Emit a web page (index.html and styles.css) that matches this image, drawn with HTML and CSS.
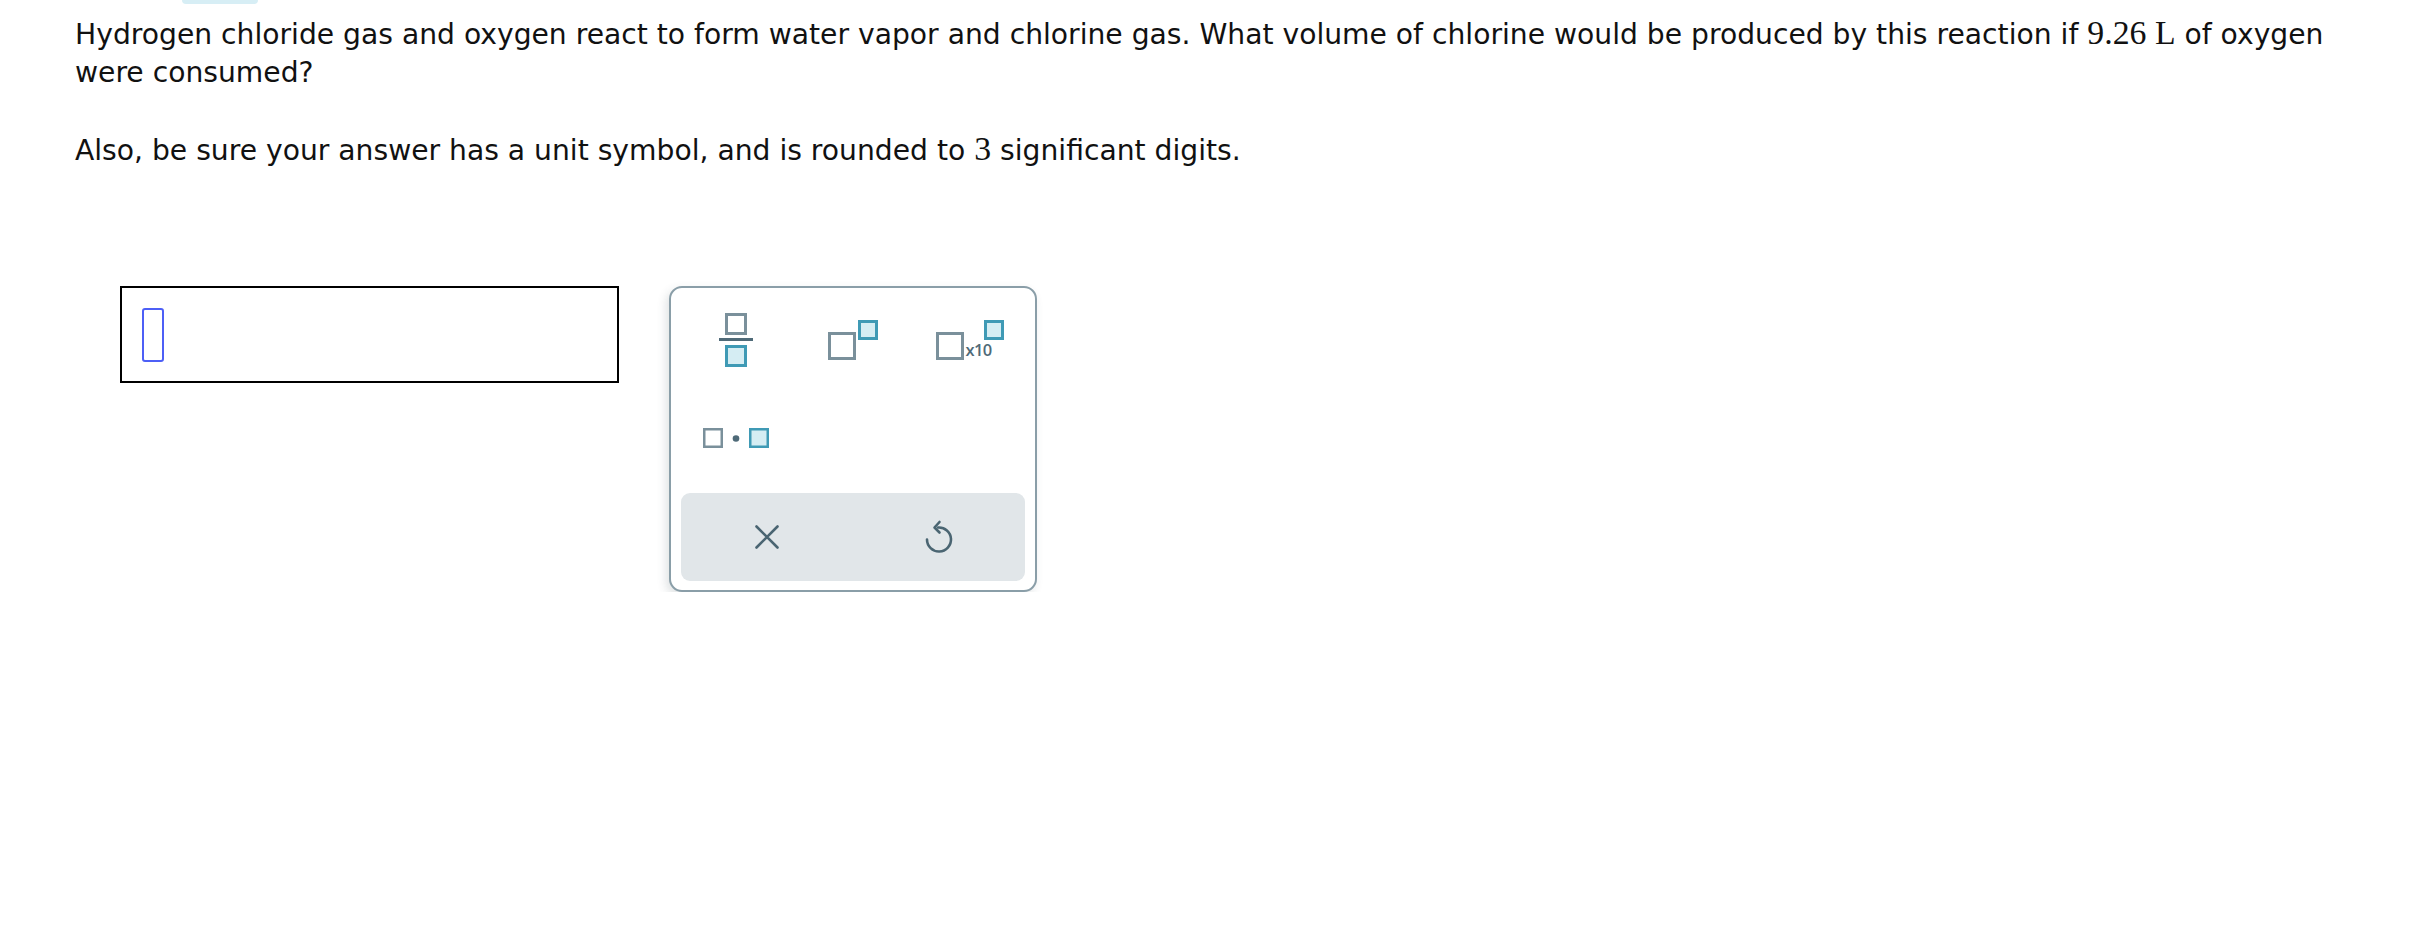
FILE: index.html
```html
<!DOCTYPE html>
<html lang="en">
<head>
<meta charset="utf-8">
<title>Question</title>
<link rel="stylesheet" href="styles.css">
</head>
<body>
<div class="peek"></div>
<div class="question">
  <p class="para">Hydrogen chloride gas and oxygen react to form water vapor and chlorine gas. What volume of chlorine would be produced by this reaction if <span class="math">9.26 L</span> of oxygen <span class="tail">were consumed?</span></p>
  <p class="para">Also, be sure your answer has a unit symbol, and is rounded to <span class="math">3</span> significant digits.</p>
</div>
<div class="answer-row">
  <div class="answer-input"><span class="cursor"></span></div>
  <div class="palette">
    <div class="palette-grid">
      <div class="cell">
        <svg class="ico" width="34" height="54" viewBox="0 0 34 54">
          <rect x="7.5" y="1.5" width="19" height="19" fill="#fff" stroke="#7a909b" stroke-width="3"/>
          <rect x="0" y="25" width="34" height="3" fill="#4f6a78"/>
          <rect x="7.5" y="33.5" width="19" height="19" fill="#d5edf3" stroke="#3f9ab5" stroke-width="3"/>
        </svg>
      </div>
      <div class="cell">
        <svg class="ico" width="50" height="40" viewBox="0 0 50 40">
          <rect x="1.5" y="13.5" width="25" height="25" fill="#fff" stroke="#7a909b" stroke-width="3"/>
          <rect x="31.5" y="1.5" width="17" height="17" fill="#d5edf3" stroke="#3f9ab5" stroke-width="3"/>
        </svg>
      </div>
      <div class="cell">
        <svg class="ico" width="68" height="40" viewBox="0 0 68 40">
          <rect x="1.5" y="13.5" width="25" height="25" fill="#fff" stroke="#7a909b" stroke-width="3"/>
          <text x="29.5" y="36" class="x10">x10</text>
          <rect x="49.5" y="1.5" width="17" height="17" fill="#d5edf3" stroke="#3f9ab5" stroke-width="3"/>
        </svg>
      </div>
      <div class="cell">
        <svg class="ico" width="66" height="20" viewBox="0 0 66 20">
          <rect x="1.25" y="1.25" width="17.5" height="17.5" fill="#fff" stroke="#7a909b" stroke-width="2.5"/>
          <circle cx="33" cy="10.5" r="3.3" fill="#4f6a78"/>
          <rect x="47.25" y="1.25" width="17.5" height="17.5" fill="#d5edf3" stroke="#3f9ab5" stroke-width="2.5"/>
        </svg>
      </div>
    </div>
    <div class="actions">
      <div class="action">
        <svg width="24" height="24" viewBox="0 0 24 24">
          <path d="M1.5 1.5 L22.5 22.5 M22.5 1.5 L1.5 22.5" fill="none" stroke="#4a6572" stroke-width="2.6" stroke-linecap="round"/>
        </svg>
      </div>
      <div class="action">
        <svg width="30" height="34" viewBox="0 0 30 34">
          <path d="M14 7.5 A12 12 0 1 1 3 19.5" fill="none" stroke="#4a6572" stroke-width="2.6" stroke-linecap="round"/>
          <path d="M15.5 2 L10.5 7.5 L15.5 12.5" fill="none" stroke="#4a6572" stroke-width="2.6" stroke-linecap="round" stroke-linejoin="round"/>
        </svg>
      </div>
    </div>
  </div>
</div>
</body>
</html>
```
FILE: styles.css
```css
html, body {
  margin: 0;
  padding: 0;
  background: #fff;
}

body {
  font-family: "DejaVu Sans", Verdana, sans-serif;
  color: #111;
}

.peek {
  margin-left: 182px;
  width: 76px;
  height: 4px;
  background: #d7eef5;
  border-radius: 0 0 9px 9px;
}

.question {
  padding: 12px 40px 0 75px;
  font-size: 28.2px;
  line-height: 38px;
}

.para {
  margin: 0 0 40px 0;
}

.para:last-child {
  margin-bottom: 0;
}

.tail {
  white-space: nowrap;
}

.math {
  font-family: "Liberation Serif", "Times New Roman", serif;
  font-size: 33.8px;
  line-height: 1;
}

.answer-row {
  display: flex;
  align-items: flex-start;
  gap: 50px;
  margin-top: 116px;
  padding-left: 120px;
}

.answer-input {
  box-sizing: border-box;
  width: 499px;
  height: 97px;
  border: 2px solid #000;
  padding: 20px 0 0 20px;
}

.cursor {
  display: block;
  box-sizing: border-box;
  width: 22px;
  height: 54px;
  border: 2px solid #4d5ff6;
  border-radius: 3px;
}

.palette {
  box-sizing: border-box;
  width: 368px;
  height: 306px;
  border: 2px solid #8a9ea8;
  border-radius: 13px;
  padding: 3px 0 9px;
  background: #fff;
  box-shadow: -3px 4px 10px rgba(60, 80, 90, 0.16);
}

.palette-grid {
  display: grid;
  grid-template-columns: repeat(3, 117px);
  grid-auto-rows: 98px;
  padding-left: 6px;
}

.cell {
  display: flex;
  align-items: center;
  justify-content: center;
}

.ico {
  display: block;
}

.x10 {
  font-family: "Open Sans", "Liberation Sans", sans-serif;
  font-size: 16.5px;
  font-weight: 600;
  fill: #4f6a78;
  letter-spacing: -0.6px;
}

.actions {
  display: grid;
  grid-template-columns: 1fr 1fr;
  height: 88px;
  margin: 6px 10px 0;
  background: #e1e6e9;
  border-radius: 9px;
}

.action {
  display: flex;
  align-items: center;
  justify-content: center;
}

.action svg {
  display: block;
}
```
